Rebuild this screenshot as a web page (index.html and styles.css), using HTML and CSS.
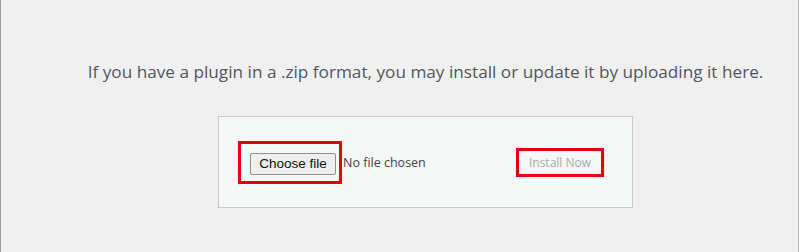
FILE: index.html
```html
<!DOCTYPE html>
<html lang="en">
<head>
<meta charset="utf-8">
<title>Upload Plugin</title>
<link rel="stylesheet" href="styles.css">
</head>
<body>
<div class="frame">
  <p class="intro">If you have a plugin in a .zip format, you may install or update it by uploading it here.</p>
  <form class="upload-box">
    <div class="mark mark-file">
      <span class="file-btn">Choose file</span>
    </div>
    <span class="file-status">No file chosen</span>
    <div class="mark mark-install">
      <span class="install-btn">Install Now</span>
    </div>
  </form>
</div>
</body>
</html>
```

FILE: styles.css
```css
* { box-sizing: border-box; }
html, body { margin: 0; padding: 0; }
body { width: 799px; height: 252px; overflow: hidden; background: #f0f0f1; }

.frame {
  height: 252px;
  border-left: 1px solid #9a9a9a;
  border-right: 1px solid #b8b8b8;
  background: #f0f0f1;
  padding-left: 52px;
  display: flex;
  flex-direction: column;
  align-items: center;
}

.intro {
  margin: 60px 0 0;
  font-family: "Open Sans", "Noto Sans", sans-serif;
  font-size: 17.2px;
  line-height: 24px;
  color: #50575e;
  white-space: nowrap;
}

.upload-box {
  margin-top: 32px;
  width: 415px;
  height: 92px;
  border: 1px solid #c9cacc;
  background: #f6f7f7;
  display: flex;
  align-items: center;
  padding-left: 19px;
}

.mark {
  border: 3px solid #e8000b;
}

.mark-file {
  padding: 9px 3px 6px 9px;
  display: flex;
}

.file-btn {
  display: block;
  width: 86px;
  height: 22px;
  border: 1px solid #8f8f8f;
  border-radius: 2px;
  background: #efefef;
  font-family: "Liberation Sans", Arial, sans-serif;
  font-size: 13.5px;
  line-height: 20px;
  color: #111;
  text-align: center;
}

.file-status {
  margin-left: 1px;
  font-family: "Open Sans", "Noto Sans", sans-serif;
  font-size: 12.5px;
  color: #3c434a;
}

.mark-install {
  margin-left: auto;
  margin-right: 28px;
  width: 88px;
  height: 29px;
  display: flex;
  align-items: center;
  justify-content: center;
}

.install-btn {
  font-family: "Open Sans", "Noto Sans", sans-serif;
  font-size: 12px;
  color: #a7aaad;
}
```
